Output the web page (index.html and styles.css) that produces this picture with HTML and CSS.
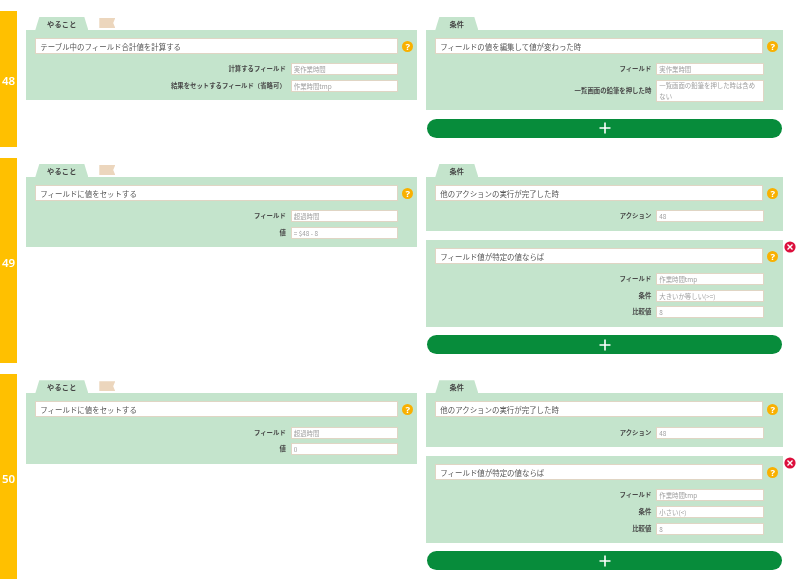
FILE: index.html
```html
<!DOCTYPE html>
<html lang="ja">
<head>
<meta charset="utf-8">
<title>アクション</title>
<link rel="stylesheet" href="styles.css">
</head>
<body>
<main class="list">

<section class="row">
  <div class="num">48</div>
  <div class="col col-left">
    <div class="tabs"><div class="tab tab-todo">やること</div><div class="flag"></div></div>
    <div class="panel">
      <div class="title-line"><div class="title">テーブル中のフィールド合計値を計算する</div><span class="help">?</span></div>
      <div class="fields">
        <div class="field"><span class="label">計算するフィールド</span><div class="value">実作業時間</div></div>
        <div class="field"><span class="label">結果をセットするフィールド（省略可）</span><div class="value">作業時間tmp</div></div>
      </div>
    </div>
  </div>
  <div class="col col-right">
    <div class="tabs"><div class="tab tab-cond">条件</div></div>
    <div class="panel">
      <div class="title-line"><div class="title">フィールドの値を編集して値が変わった時</div><span class="help">?</span></div>
      <div class="fields">
        <div class="field"><span class="label">フィールド</span><div class="value">実作業時間</div></div>
        <div class="field"><span class="label">一覧画面の鉛筆を押した時</span><div class="value value-multi">一覧画面の鉛筆を押した時は含めない</div></div>
      </div>
    </div>
    <div class="add"><svg viewBox="0 0 12 12" width="12" height="12"><path d="M6 .5v11M.5 6h11" stroke="#fff" stroke-width="1.6" fill="none"/></svg></div>
  </div>
</section>

<section class="row">
  <div class="num">49</div>
  <div class="col col-left">
    <div class="tabs"><div class="tab tab-todo">やること</div><div class="flag"></div></div>
    <div class="panel">
      <div class="title-line"><div class="title">フィールドに値をセットする</div><span class="help">?</span></div>
      <div class="fields">
        <div class="field"><span class="label">フィールド</span><div class="value">超過時間</div></div>
        <div class="field"><span class="label">値</span><div class="value">= $48 - 8</div></div>
      </div>
    </div>
  </div>
  <div class="col col-right">
    <div class="tabs"><div class="tab tab-cond">条件</div></div>
    <div class="panel">
      <div class="title-line"><div class="title">他のアクションの実行が完了した時</div><span class="help">?</span></div>
      <div class="fields">
        <div class="field"><span class="label">アクション</span><div class="value">48</div></div>
      </div>
    </div>
    <div class="panel panel-extra">
      <span class="remove"><svg viewBox="0 0 12 12" width="12" height="12"><circle cx="6" cy="6" r="5.6" fill="#dc0f3c"/><path d="M3.5 3.5l5 5M8.5 3.5l-5 5" stroke="#fff" stroke-width="1.4" fill="none"/></svg></span>
      <div class="title-line"><div class="title">フィールド値が特定の値ならば</div><span class="help">?</span></div>
      <div class="fields">
        <div class="field"><span class="label">フィールド</span><div class="value">作業時間tmp</div></div>
        <div class="field"><span class="label">条件</span><div class="value">大きいか等しい(&gt;=)</div></div>
        <div class="field"><span class="label">比較値</span><div class="value">8</div></div>
      </div>
    </div>
    <div class="add"><svg viewBox="0 0 12 12" width="12" height="12"><path d="M6 .5v11M.5 6h11" stroke="#fff" stroke-width="1.6" fill="none"/></svg></div>
  </div>
</section>

<section class="row">
  <div class="num">50</div>
  <div class="col col-left">
    <div class="tabs"><div class="tab tab-todo">やること</div><div class="flag"></div></div>
    <div class="panel">
      <div class="title-line"><div class="title">フィールドに値をセットする</div><span class="help">?</span></div>
      <div class="fields">
        <div class="field"><span class="label">フィールド</span><div class="value">超過時間</div></div>
        <div class="field"><span class="label">値</span><div class="value">0</div></div>
      </div>
    </div>
  </div>
  <div class="col col-right">
    <div class="tabs"><div class="tab tab-cond">条件</div></div>
    <div class="panel">
      <div class="title-line"><div class="title">他のアクションの実行が完了した時</div><span class="help">?</span></div>
      <div class="fields">
        <div class="field"><span class="label">アクション</span><div class="value">48</div></div>
      </div>
    </div>
    <div class="panel panel-extra">
      <span class="remove"><svg viewBox="0 0 12 12" width="12" height="12"><circle cx="6" cy="6" r="5.6" fill="#dc0f3c"/><path d="M3.5 3.5l5 5M8.5 3.5l-5 5" stroke="#fff" stroke-width="1.4" fill="none"/></svg></span>
      <div class="title-line"><div class="title">フィールド値が特定の値ならば</div><span class="help">?</span></div>
      <div class="fields">
        <div class="field"><span class="label">フィールド</span><div class="value">作業時間tmp</div></div>
        <div class="field"><span class="label">条件</span><div class="value">小さい(&lt;)</div></div>
        <div class="field"><span class="label">比較値</span><div class="value">8</div></div>
      </div>
    </div>
    <div class="add"><svg viewBox="0 0 12 12" width="12" height="12"><path d="M6 .5v11M.5 6h11" stroke="#fff" stroke-width="1.6" fill="none"/></svg></div>
  </div>
</section>

</main>
</body>
</html>
```
FILE: styles.css
```css
* { box-sizing: border-box; }
html, body { margin: 0; padding: 0; height: 100%; overflow: hidden; background: #fff; }
body {
  font-family: "Noto Sans CJK JP", "Noto Sans", sans-serif;
  color: #555;
  filter: blur(0.4px);
}
.list { display: flex; flex-direction: column; gap: 11px; padding-top: 11px; }
.row { display: flex; align-items: stretch; }
.num {
  flex: 0 0 17px;
  background: #ffc000;
  color: #fff;
  font-family: "Noto Sans", sans-serif;
  font-size: 11.5px;
  font-weight: 600;
  display: flex;
  align-items: center;
  justify-content: center;
  padding-top: 3px;
}
.col { display: flex; flex-direction: column; padding-top: 6px; padding-bottom: 9px; }
.col-left { width: 391px; margin-left: 9.3px; }
.col-right { width: 356.5px; margin-left: 9px; }
.tabs { display: flex; height: 13px; padding-left: 9px; align-items: flex-start; }
.tab {
  height: 13px;
  background: #c4e4cc;
  font-size: 7.2px;
  font-weight: 700;
  color: #444;
  line-height: 14px;
  text-align: center;
  clip-path: polygon(4px 0, calc(100% - 4px) 0, 100% 100%, 0 100%);
}
.tab-todo { width: 53px; letter-spacing: 0.2px; }
.tab-cond { width: 43px; }
.flag {
  width: 16px;
  height: 10px;
  margin: 1px 0 0 11px;
  background: #ecd6bd;
  clip-path: polygon(0 0, 100% 0, 87% 50%, 100% 100%, 0 100%);
}
.panel { position: relative; background: #c4e4cc; padding: 8.3px 0 8.3px 9px; }
.panel-extra { margin-top: 9px; }
.title-line { display: flex; align-items: center; }
.title {
  flex: 1;
  height: 16px;
  background: #fff;
  border: 1px solid #e0d5c4;
  font-size: 7.45px;
  line-height: 16px;
  padding-left: 4px;
  white-space: nowrap;
  color: #555;
}
.help {
  flex: 0 0 11px;
  height: 11px;
  margin: 1px 4px 0 4px;
  border-radius: 50%;
  background: #f9b000;
  color: #fff;
  font-family: "Noto Sans", sans-serif;
  font-size: 9.5px;
  font-weight: 700;
  line-height: 11px;
  text-align: center;
}
.col-right .help { margin-right: 4.5px; }
.fields { display: flex; flex-direction: column; gap: 4.6px; margin-top: 9.2px; padding-right: 19px; }
.field { display: flex; align-items: center; justify-content: flex-end; }
.label {
  font-size: 6.4px;
  line-height: 10px;
  font-weight: 700;
  color: #484848;
  margin-right: 5px;
  white-space: nowrap;
}
.value {
  flex: 0 0 107.5px;
  height: 12px;
  background: #fff;
  border: 1px solid #e0d5c4;
  font-size: 6.4px;
  line-height: 12px;
  padding: 0 2px;
  color: #a0a0a0;
  overflow: hidden;
}
.value-multi { height: 22px; line-height: 10.5px; }
.remove { position: absolute; right: -13.7px; top: 0.9px; width: 12px; height: 12px; display: block; }
.remove svg { display: block; }
.add {
  height: 19px;
  margin: 8.5px 0.5px 0;
  border-radius: 9.5px;
  background: #078c3b;
  display: flex;
  align-items: center;
  justify-content: center;
}
```
